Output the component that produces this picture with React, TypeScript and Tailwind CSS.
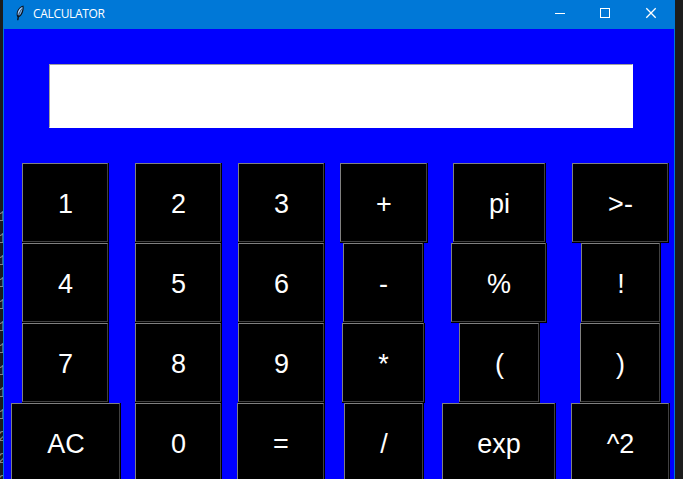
import React from "react";

type Key = { label: string; box: string };

const rows: Key[][] = [
  [
    { label: "1", box: "ml-[18px] w-[87px]" },
    { label: "2", box: "ml-[26px] w-[87px]" },
    { label: "3", box: "ml-[16px] w-[87px]" },
    { label: "+", box: "ml-[15px] w-[88px]" },
    { label: "pi", box: "ml-[25px] w-[93px]" },
    { label: ">-", box: "ml-[26px] w-[97px]" },
  ],
  [
    { label: "4", box: "ml-[18px] w-[87px]" },
    { label: "5", box: "ml-[26px] w-[87px]" },
    { label: "6", box: "ml-[16px] w-[87px]" },
    { label: "-", box: "ml-[18px] w-[81px]" },
    { label: "%", box: "ml-[27px] w-[96px]" },
    { label: "!", box: "ml-[34px] w-[80px]" },
  ],
  [
    { label: "7", box: "ml-[18px] w-[87px]" },
    { label: "8", box: "ml-[26px] w-[87px]" },
    { label: "9", box: "ml-[16px] w-[87px]" },
    { label: "*", box: "ml-[17px] w-[83px]" },
    { label: "(", box: "ml-[34px] w-[81px]" },
    { label: ")", box: "ml-[40px] w-[81px]" },
  ],
  [
    { label: "AC", box: "ml-[7px] w-[110px]" },
    { label: "0", box: "ml-[14px] w-[87px]" },
    { label: "=", box: "ml-[15px] w-[88px]" },
    { label: "/", box: "ml-[19px] w-[80px]" },
    { label: "exp", box: "ml-[18px] w-[114px]" },
    { label: "^2", box: "ml-[15px] w-[99px]" },
  ],
];

function CalcKey({ label, box }: Key) {
  return (
    <button className={`${box} h-20 shrink-0 bg-black pr-px pb-px text-white`}>
      <span className="flex h-full w-full items-center justify-center border border-t-[#808080] border-r-[#404040] border-b-[#404040] border-l-[#808080] pt-[3px] pl-px text-[27px] leading-none">
        {label}
      </span>
    </button>
  );
}

function Feather() {
  return (
    <svg width="10" height="16" viewBox="0 0 10 16">
      <path d="M2.2 15.2 L2.6 12.2 C.2 9 2.6 2 8.4 .4 C9.4 5 7.4 10.5 3.8 12.2 L3.3 15.2 Z" fill="#0a0f18" />
      <path d="M2.7 10 C2 7 4.4 2.8 7.6 1.7 C7.8 5 6.4 9 4 10.8 Z" fill="#7fb2ea" />
      <path d="M2.8 15 C3.2 10.5 4.6 7 6.6 4" stroke="#0a0f18" strokeWidth="0.6" fill="none" />
      <path d="M3.4 7.6 L5.6 3.6" stroke="#dcecff" strokeWidth="0.8" />
    </svg>
  );
}

const lineNumbers = ["1", "1", "1", "1", "1", "1", "1", "1", "1", "1", "2", "2", "2"];

export default function App() {
  return (
    <div className="flex h-[479px] w-[683px] overflow-hidden bg-[#1c1c1c] font-['Liberation_Sans',Arial,sans-serif]">
      <div className="h-full w-[3px] shrink-0 overflow-hidden pt-[206px] font-['Liberation_Mono',monospace] text-[15px] text-[#858585]">
        {lineNumbers.map((n, i) => (
          <div key={i} className="-ml-[2px] h-[22px] w-3 leading-[23px]">
            {n}
          </div>
        ))}
      </div>
      <div className="flex h-full w-[672px] shrink-0 flex-col border-x border-[#0078d7] bg-[#0000ff]">
        <header className="flex h-[29px] shrink-0 items-center bg-[#0078d7] pb-[3px] pl-[11px] text-white">
          <Feather />
          <span className="ml-2 flex-1 pt-px font-['Open_Sans','Noto_Sans',sans-serif] text-[12px] tracking-[-0.33px]">CALCULATOR</span>
          <svg width="120" height="12" viewBox="0 0 120 12" fill="none" stroke="white" shapeRendering="crispEdges">
            <path d="M1 6.5H11" />
            <rect x="46.5" y="1.5" width="9" height="9" />
            <path d="M92.3 1.3L101.7 10.7M101.7 1.3L92.3 10.7" shapeRendering="geometricPrecision" strokeWidth="1.3" />
          </svg>
        </header>
        <input
          readOnly
          value=""
          aria-label="Display"
          className="mt-[35px] ml-[45px] block h-16 w-[584px] shrink-0 border border-t-[#a0a0a0] border-r-white border-b-white border-l-[#a0a0a0] bg-white outline-none"
        />
        <main className="mt-[35px] flex shrink-0 flex-col">
          {rows.map((row, i) => (
            <div key={i} className="flex h-20">
              {row.map((key) => (
                <CalcKey key={key.label} {...key} />
              ))}
            </div>
          ))}
        </main>
      </div>
    </div>
  );
}
